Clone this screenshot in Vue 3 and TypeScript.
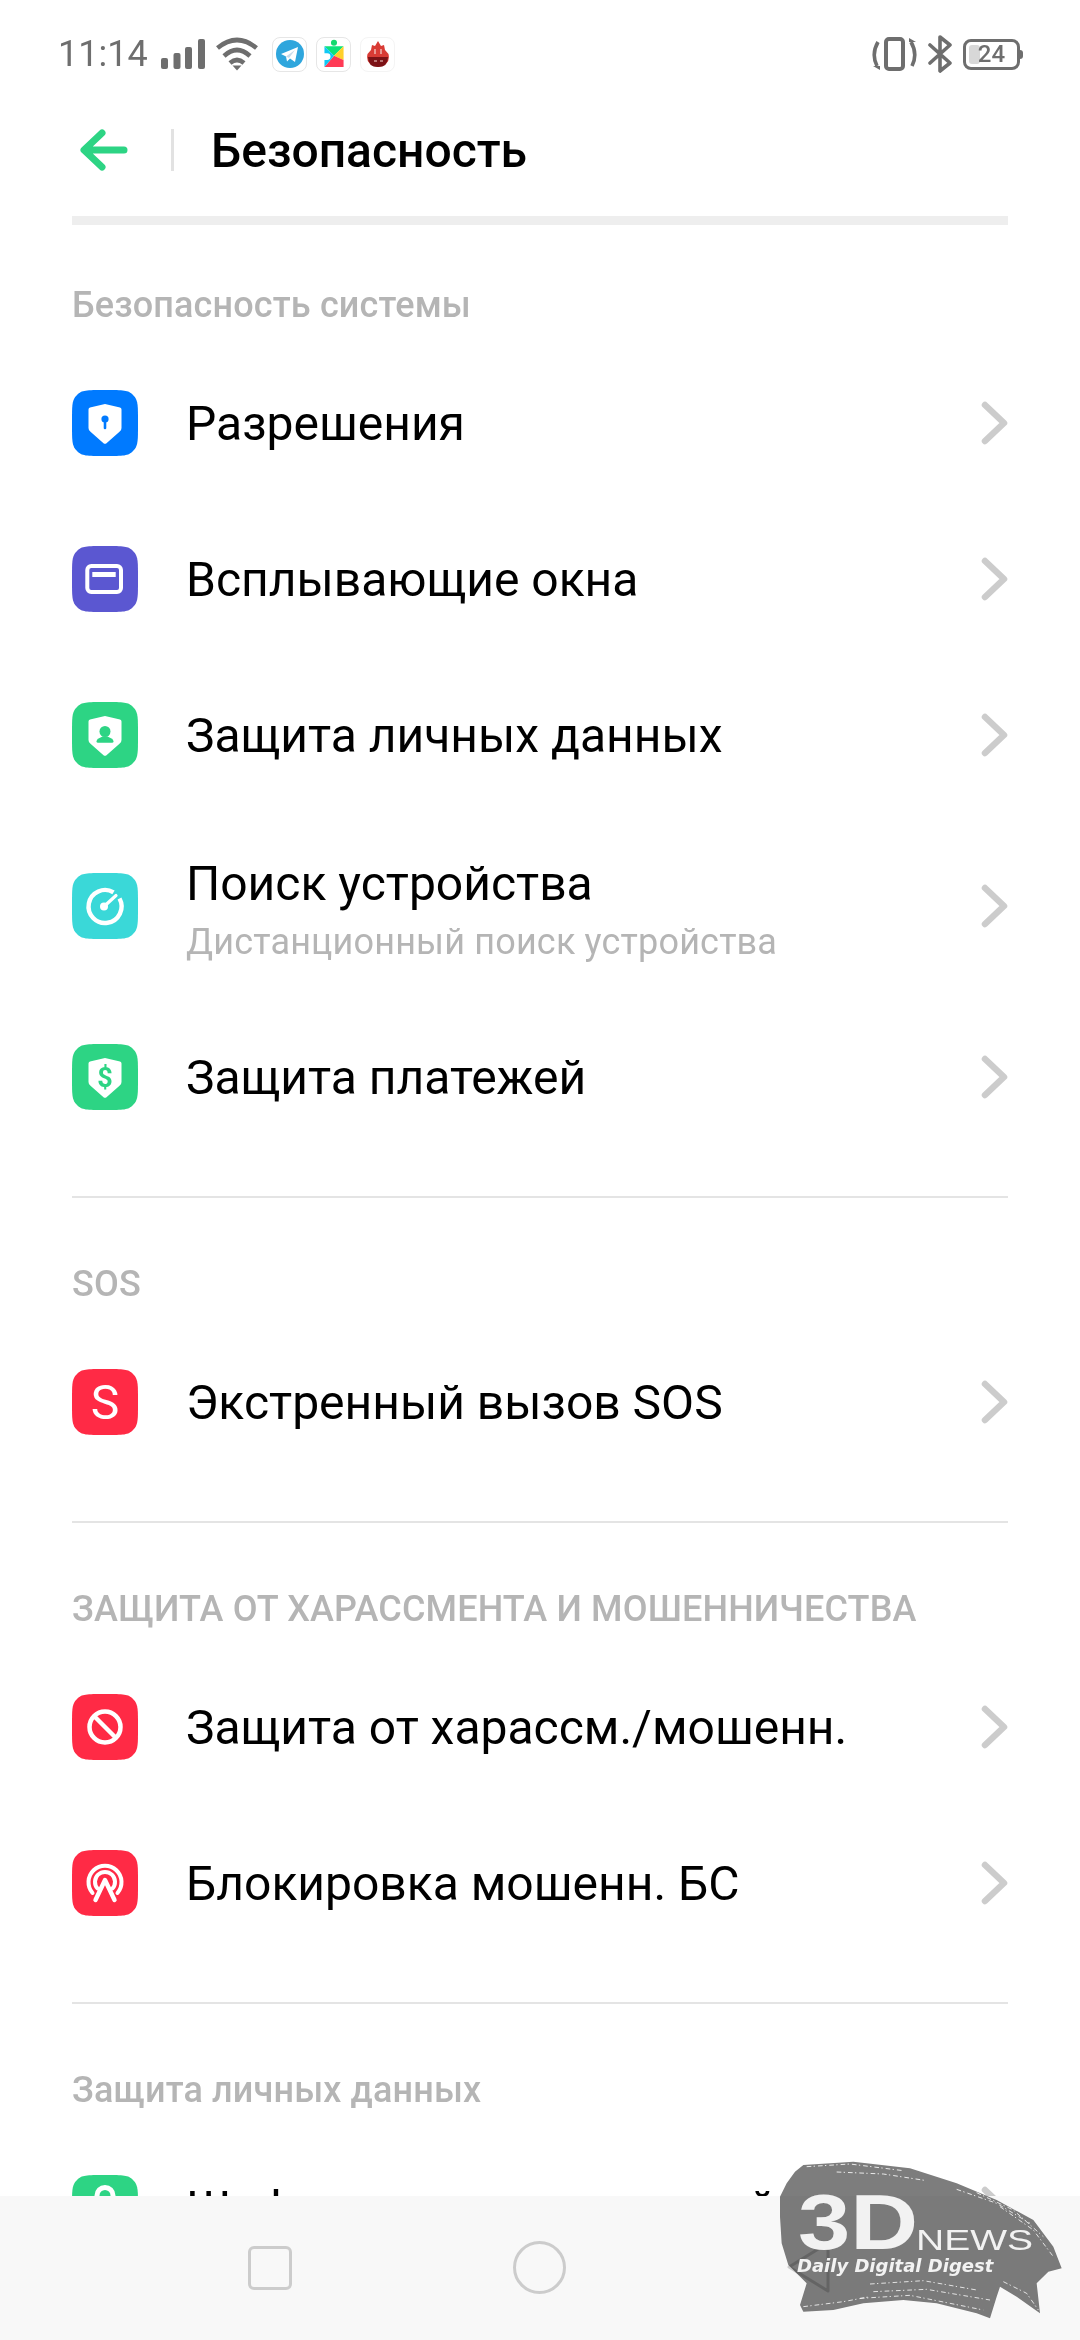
<script setup lang="ts">
interface Row {
  title: string
  sub?: string
  color: string
  icon: string
}
interface Section {
  heading: string
  rows: Row[]
}

const green = '#2dd484'
const red = '#ff2a45'

const sections: Section[] = [
  {
    heading: 'Безопасность системы',
    rows: [
      { title: 'Разрешения', color: '#007aff', icon: 'key' },
      { title: 'Всплывающие окна', color: '#5b57d1', icon: 'window' },
      { title: 'Защита личных данных', color: green, icon: 'person' },
      { title: 'Поиск устройства', sub: 'Дистанционный поиск устройства', color: '#3ad8d8', icon: 'gauge' },
      { title: 'Защита платежей', color: green, icon: 'dollar' }
    ]
  },
  {
    heading: 'SOS',
    rows: [{ title: 'Экстренный вызов SOS', color: red, icon: 's' }]
  },
  {
    heading: 'ЗАЩИТА ОТ ХАРАССМЕНТА И МОШЕННИЧЕСТВА',
    rows: [
      { title: 'Защита от харассм./мошенн.', color: red, icon: 'ban' },
      { title: 'Блокировка мошенн. БС', color: red, icon: 'antenna' }
    ]
  },
  {
    heading: 'Защита личных данных',
    rows: [{ title: 'Шифрование приложений', color: green, icon: 'lock' }]
  }
]

const shield = 'M33 14L48 17.5q1.5 .4 1.5 2V38q0 2.5-2 3.8L34.2 53.4q-1.2 .7-2.4 0L18.5 41.8q-2-1.3-2-3.8V19.5q0-1.6 1.5-2z'
</script>

<template>
  <div class="phone">
    <div class="status">
      <div class="status__left">
        <span class="status__time">11:14</span>
        <svg width="44" height="30" viewBox="0 0 44 30" class="status__signal">
          <rect x="0" y="19" width="7" height="11" rx="2" />
          <rect x="12.5" y="14" width="7" height="16" rx="2" />
          <rect x="24" y="8" width="7" height="22" rx="2" />
          <rect x="37" y="0" width="7" height="30" rx="2" />
        </svg>
        <svg width="42" height="34" viewBox="0 0 42 34" class="status__wifi" fill="none" stroke="#6e6e6e" stroke-width="4.6">
          <path d="M1.5 11Q21-5 40.5 11" />
          <path d="M8 19Q21 7 34 19" />
          <path d="M14 26Q21 20 28 26" />
          <path d="M16.500 28.500h9L21 33.500z" fill="#6e6e6e" stroke="none" />
        </svg>
        <div class="appicon appicon--first">
          <svg width="28" height="28" viewBox="0 0 28 28">
            <circle cx="14" cy="14" r="14" fill="#2fa6dd" />
            <path d="M5 14l17-7-3 15-5-3.500-3 3-1-5z" fill="#fff" />
            <path d="M10 16.500l9-6.500-6 8z" fill="#c8daea" />
          </svg>
        </div>
        <div class="appicon">
          <svg width="26" height="30" viewBox="0 0 30 34">
            <circle cx="15" cy="4" r="3.500" fill="#14d96f" />
            <path d="M4 8h22L15 19z" fill="#0de37a" />
            <path d="M26 8v16L15 19z" fill="#ffd02a" />
            <path d="M4 32l11-13 11 5v8z" fill="#ff3a55" />
            <path d="M4 8l11 11L4 32v-8h3a4 4 0 0 0 0-8H4z" fill="#10c8f5" />
          </svg>
        </div>
        <div class="appicon appicon--bare">
          <svg width="24" height="27" viewBox="0 0 24 27">
            <path d="M12 0l3 5 3-1 1 5 3.500 4Q25 24 12 26 -1 24 1.500 13L5 9l1-5 3 1z" fill="#d93b35" />
            <path d="M2 16h20q0 10-10 10T2 16z" fill="#7c1216" />
            <path d="M8 20h3M14 20h3M9 8v5M15 8v5" stroke="#f6d6d0" stroke-width="1.200" />
          </svg>
        </div>
      </div>
      <div class="status__right">
        <svg width="45" height="34" viewBox="0 0 45 34" fill="none" stroke="#6e6e6e">
          <rect x="14" y="2" width="17" height="30" rx="3" stroke-width="4" />
          <path d="M6 5Q-1 17 5 29" stroke-width="3.600" />
          <path d="M39 5Q46 17 40 29" stroke-width="3.600" />
          <path d="M1 29h7v4zM37 1l7 4h-7z" fill="#6e6e6e" stroke="none" />
        </svg>
        <svg width="24" height="38" viewBox="0 0 24 38" fill="none" stroke="#6e6e6e" stroke-width="3.600" stroke-linejoin="round" stroke-linecap="round">
          <path d="M2 10l20 18-10 8V2l10 8L2 28" />
        </svg>
        <div class="battery">
          <div class="battery__fill" />
          <span class="battery__num">24</span>
        </div>
      </div>
    </div>

    <header class="topbar">
      <svg class="topbar__back" width="48" height="42" viewBox="0 0 48 42" fill="none" stroke="#2dd484" stroke-width="7" stroke-linecap="round" stroke-linejoin="round">
        <path d="M44 21H5M22 4L4 21l18 17" />
      </svg>
      <span class="topbar__sep" />
      <h1 class="topbar__title">Безопасность</h1>
    </header>

    <div class="rule" />

    <section v-for="(sec, i) in sections" :key="sec.heading" class="section" :class="{ 'section--first': i === 0 }">
      <h2 class="section__heading">{{ sec.heading }}</h2>
      <div
        v-for="row in sec.rows"
        :key="row.title"
        class="row"
        :class="{ 'row--tall': row.sub }"
      >
        <svg class="row__icon" width="66" height="66" viewBox="0 0 66 66">
          <path
            d="M33 0C52 0 56 0 61 5S66 14 66 33 66 56 61 61 52 66 33 66 10 66 5 61 0 52 0 33 0 10 5 5 14 0 33 0z"
            :fill="row.color"
          />
          <template v-if="row.icon === 'key'">
            <path :d="shield" fill="#fff" />
            <circle cx="33" cy="29" r="3.600" :fill="row.color" />
            <path d="M33 29v9" :stroke="row.color" stroke-width="2.600" stroke-linecap="round" />
          </template>
          <template v-else-if="row.icon === 'window'">
            <rect x="15.300" y="20" width="33.700" height="26" rx="4" fill="none" stroke="#fff" stroke-width="4" />
            <rect x="20.300" y="26" width="23.400" height="5" fill="#fff" />
          </template>
          <template v-else-if="row.icon === 'person'">
            <path :d="shield" fill="#fff" />
            <circle cx="33" cy="29.500" r="5.500" :fill="row.color" />
            <path d="M24.500 39.500q0-2 2-3l4-2h5l4 2q2 1 2 3 0 1.200-1.500 1.200h-14q-1.500 0-1.500-1.200z" :fill="row.color" />
          </template>
          <template v-else-if="row.icon === 'gauge'">
            <path d="M41.500 19.300A16.500 16.500 0 1 0 47.500 25.500" fill="none" stroke="#fff" stroke-width="4.400" />
            <circle cx="32" cy="33.500" r="4" fill="#fff" />
            <path d="M32 33.500L44 22.500" stroke="#fff" stroke-width="3.200" stroke-linecap="round" />
          </template>
          <template v-else-if="row.icon === 'dollar'">
            <path :d="shield" fill="#fff" />
            <text x="33" y="43" class="row__dollar" :fill="row.color">$</text>
          </template>
          <text v-else-if="row.icon === 's'" x="33" y="50" class="row__s">S</text>
          <template v-else-if="row.icon === 'ban'">
            <circle cx="33" cy="33" r="15.500" fill="none" stroke="#fff" stroke-width="4.500" />
            <path d="M22 22l22 22" stroke="#fff" stroke-width="4.500" />
          </template>
          <template v-else-if="row.icon === 'antenna'">
            <g fill="none" stroke="#fff" stroke-width="4" stroke-linecap="round">
              <path d="M20.500 43A16.500 16.500 0 1 1 45.500 43" />
              <path d="M25.500 38.500A10 10 0 1 1 40.500 38.500" />
              <path d="M23.500 50L33 30L42.500 50" stroke-width="4.400" stroke-linejoin="round" />
            </g>
          </template>
          <template v-else-if="row.icon === 'lock'">
            <path d="M25 34V20.500a8 8 0 0 1 16 0V34" fill="none" stroke="#fff" stroke-width="5" />
            <rect x="18" y="30" width="30" height="22" rx="3" fill="#fff" />
          </template>
        </svg>
        <div class="row__text">
          <div class="row__title">{{ row.title }}</div>
          <div v-if="row.sub" class="row__sub">{{ row.sub }}</div>
        </div>
        <svg class="row__chevron" width="28" height="44" viewBox="0 0 28 44" fill="none" stroke="#cccccc" stroke-width="6.500" stroke-linecap="round" stroke-linejoin="round">
          <path d="M5 4l19 18L5 40" />
        </svg>
      </div>
    </section>

    <nav class="navbar">
      <span class="navbar__square" />
      <span class="navbar__circle" />
      <svg class="navbar__back" width="44" height="54" viewBox="0 0 44 54" fill="none" stroke="#cccccc" stroke-width="3" stroke-linejoin="round">
        <path d="M42 3v48L3 27z" />
      </svg>
    </nav>

    <div class="mark">
      <svg class="mark__brush" width="300" height="180" viewBox="0 0 900 540">
        <path
          d="M100 45L250 35 420 55 560 100 680 150 790 210 850 290 875 355 835 365 800 400 810 490 740 440 690 410 680 440 660 505 620 490 500 460 400 450 280 460 190 480 100 485 90 465 110 400 55 345 35 280 30 200 30 140 50 100 75 65z"
          fill="#7d7d7d"
        />
        <g fill="none" stroke="#fff" stroke-width="2.500" stroke-dasharray="14 7 4 9">
          <path d="M110 50L240 42 400 62" />
          <path d="M200 66L340 72 470 92" />
          <path d="M560 118L680 160 780 220" />
          <path d="M620 128L730 180 820 260" />
          <path d="M690 170L790 240 850 320" />
          <path d="M300 402L460 392 620 420" />
          <path d="M310 425L470 418 660 450" />
          <path d="M270 445L420 436 640 480" />
          <path d="M100 470L220 455 300 440" />
          <path d="M700 395L770 430 805 480" />
        </g>
      </svg>
      <span class="mark__three">3D</span>
      <span class="mark__news">NEWS</span>
      <span class="mark__digest">Daily Digital Digest</span>
    </div>
  </div>
</template>

<style>
html, body { margin: 0; padding: 0; background: #fff; }
</style>

<style scoped>
.phone {
  position: relative;
  width: 1080px;
  height: 2340px;
  overflow: hidden;
  background: #fff;
  font-family: Roboto, "Noto Sans", sans-serif;
}

.status {
  height: 112px;
  box-sizing: border-box;
  padding: 36px 60px 0 58px;
  display: flex;
  justify-content: space-between;
  align-items: flex-start;
}
.status__left { display: flex; align-items: center; height: 36px; }
.status__right { display: flex; align-items: center; gap: 11px; height: 36px; }
.status__time { font-size: 36px; line-height: 36px; color: #6e6e6e; width: 103px; }
.status__signal { fill: #6e6e6e; }
.status__wifi { margin-left: 11px; }
.appicon {
  width: 35px;
  height: 35px;
  margin-left: 9px;
  box-sizing: border-box;
  border: 1px solid #e6e6e6;
  border-radius: 8px;
  display: flex;
  align-items: center;
  justify-content: center;
}
.appicon--first { margin-left: 14px; }
.appicon--bare { border-color: #f4f4f4; }

.battery {
  position: relative;
  width: 57px;
  height: 31px;
  box-sizing: border-box;
  border: 3px solid #6e6e6e;
  border-radius: 8px;
  display: flex;
  align-items: center;
  justify-content: center;
}
.battery::after {
  content: '';
  position: absolute;
  right: -6px;
  top: 8px;
  width: 3px;
  height: 9px;
  background: #6e6e6e;
  border-radius: 0 3px 3px 0;
}
.battery__fill { position: absolute; left: 3px; top: 3px; bottom: 3px; width: 11px; background: #d8d8d8; border-radius: 3px; }
.battery__num { position: relative; font-size: 24px; font-weight: 500; color: #6e6e6e; line-height: 1; }

.topbar { height: 76px; display: flex; align-items: center; padding-left: 80px; }
.topbar__back { flex: none; }
.topbar__sep { width: 3px; height: 42px; margin-left: 43px; background: #e2e2e2; }
.topbar__title { margin: 0 0 0 37px; font-size: 48px; font-weight: 500; color: #000; }

.rule { height: 9px; margin: 28px 72px 0; background: #eeeeee; }

.section { margin: 41px 72px 0; padding-top: 44px; border-top: 2px solid #e4e4e4; }
.section--first { border-top: none; padding-top: 38px; margin-top: 0; }
.section__heading {
  margin: 0;
  height: 82px;
  font-size: 36px;
  line-height: 84px;
  font-weight: 500;
  letter-spacing: 0.15px;
  color: #b5b5b5;
}

.row { height: 156px; display: flex; align-items: center; }
.row--tall { height: 186px; }
.row__icon { flex: none; }
.row__text { flex: 1; margin-left: 48px; padding-top: 2px; }
.row--tall .row__text { padding-top: 8px; }
.row__title { font-size: 48px; line-height: 56px; color: #000; }
.row__sub { font-size: 36px; line-height: 44px; letter-spacing: 0.17px; color: #b5b5b5; margin-top: 8px; }
.row__chevron { flex: none; }
.row__dollar { font-family: Roboto, sans-serif; font-size: 27px; font-weight: 700; text-anchor: middle; }
.row__s { font-family: Roboto, sans-serif; font-size: 48px; font-weight: 400; text-anchor: middle; fill: #fff; }

.navbar {
  position: absolute;
  left: 0;
  right: 0;
  bottom: 0;
  height: 144px;
  background: #f8f8f8;
}
.navbar__square {
  position: absolute;
  left: 248px;
  top: 50px;
  width: 44px;
  height: 44px;
  box-sizing: border-box;
  border: 3px solid #cccccc;
  border-radius: 6px;
}
.navbar__circle {
  position: absolute;
  left: 513px;
  top: 45px;
  width: 53px;
  height: 53px;
  box-sizing: border-box;
  border: 3px solid #cccccc;
  border-radius: 50%;
}
.navbar__back { position: absolute; left: 786px; top: 44px; }

.mark { position: absolute; left: 770px; top: 2150px; width: 300px; height: 180px; color: #f2f2f2; }
.mark__brush { position: absolute; inset: 0; mix-blend-mode: multiply; }
.mark__three {
  position: absolute;
  left: 28px;
  top: 44px;
  font-family: "Liberation Sans", sans-serif;
  font-size: 77px;
  line-height: 57px;
  font-weight: 700;
  transform: scaleX(1.22);
  transform-origin: left;
}
.mark__news {
  position: absolute;
  left: 146px;
  top: 78px;
  font-family: "Liberation Sans", sans-serif;
  font-size: 30px;
  line-height: 23px;
  transform: scaleX(1.3);
  transform-origin: left;
}
.mark__digest {
  position: absolute;
  left: 27px;
  top: 106px;
  font-family: "DejaVu Sans", sans-serif;
  font-size: 18px;
  line-height: 20px;
  font-weight: 700;
  font-style: italic;
  white-space: nowrap;
}
</style>
